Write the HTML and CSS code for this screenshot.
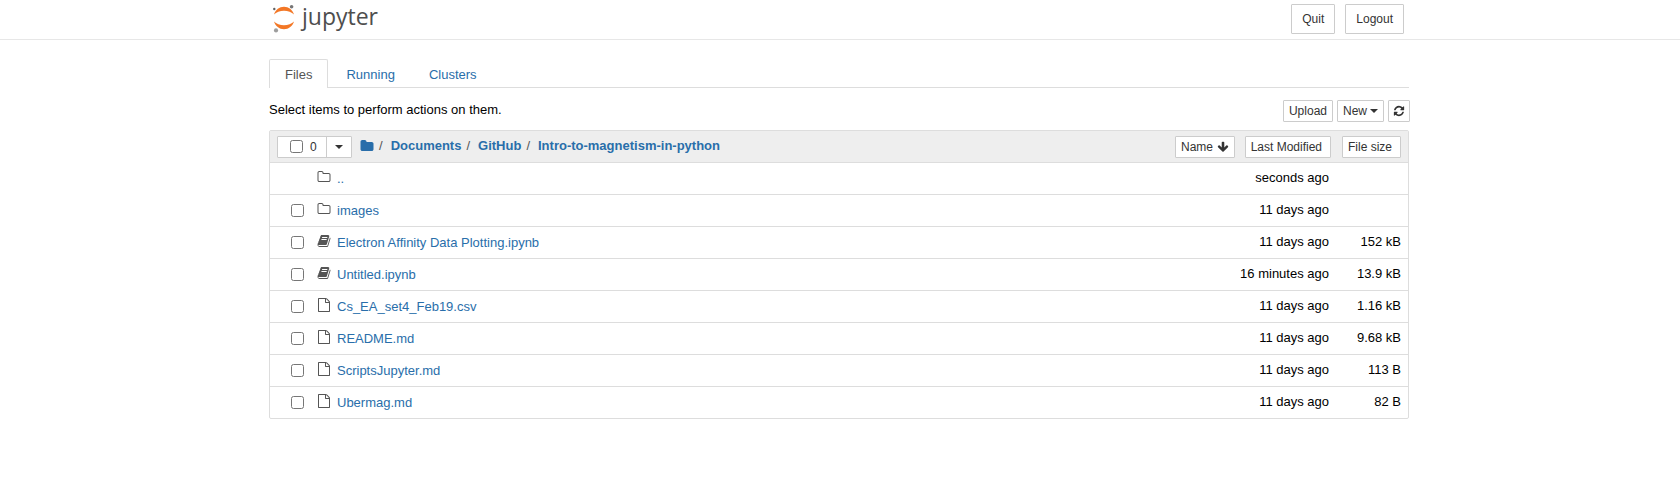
FILE: index.html
```html
<!DOCTYPE html>
<html lang="en">
<head>
<meta charset="utf-8">
<title>Home Page - Select or create a notebook</title>
<link rel="stylesheet" href="styles.css">
</head>
<body>
<svg class="sprite" aria-hidden="true">
  <symbol id="folder" viewBox="0 0 1792 1792"><path d="M1728 608v704q0 92-66 158t-158 66h-1216q-92 0-158-66t-66-158v-960q0-92 66-158t158-66h320q92 0 158 66t66 158v32h672q92 0 158 66t66 158z"/></symbol>
  <symbol id="folder-o" viewBox="0 0 1792 1792"><path d="M1600 1312v-704q0-40-28-68t-68-28h-704q-40 0-68-28t-28-68v-64q0-40-28-68t-68-28h-320q-40 0-68 28t-28 68v960q0 40 28 68t68 28h1216q40 0 68-28t28-68zm128-704v704q0 92-66 158t-158 66h-1216q-92 0-158-66t-66-158v-960q0-92 66-158t158-66h320q92 0 158 66t66 158v32h672q92 0 158 66t66 158z"/></symbol>
  <symbol id="file-o" viewBox="0 0 1792 1792"><path d="M1596 380q28 28 48 76t20 88v1152q0 40-28 68t-68 28h-1344q-40 0-68-28t-28-68v-1600q0-40 28-68t68-28h896q40 0 88 20t76 48zm-444-244v376h376q-10-29-22-41l-313-313q-12-12-41-22zm384 1528v-1024h-416q-40 0-68-28t-28-68v-416h-768v1536h1280z"/></symbol>
  <symbol id="book" viewBox="0 0 1792 1792"><path d="M1703 478q40 57 18 129l-275 906q-19 64-76.5 107.5t-122.5 43.5h-923q-77 0-148.5-53.5t-99.5-131.5q-24-67-2-127 0-4 3-27t4-37q1-8-3-21.5t-3-19.5q2-11 8-21t16.5-23.5 16.5-23.5q23-38 45-91.5t30-91.5q3-10 .5-30t-.5-28q3-11 17-28t17-23q21-36 42-92t25-90q1-9-2.5-32t.5-28q4-13 22-30.5t22-22.5q19-26 42.5-84.5t27.5-96.5q1-8-3-25.5t-2-26.5q2-8 9-18t18-23 17-21q8-12 16.5-30.5t15-35 16-36 19.5-32 26.5-23.5 36-11.5 47.5 5.5l-1 3q38-9 51-9h761q74 0 114 56t18 130l-274 906q-36 119-71.5 153.5t-128.5 34.5h-869q-27 0-38 15-11 16-1 43 24 70 144 70h923q29 0 56-15.5t35-41.5l300-987q7-22 5-57 38 15 59 43zm-1064 2q-4 13 2 22.5t20 9.5h608q13 0 25.5-9.5t16.5-22.5l21-64q4-13-2-22.5t-20-9.5h-608q-13 0-25.5 9.5t-16.5 22.5zm-83 256q-4 13 2 22.5t20 9.5h608q13 0 25.5-9.5t16.5-22.5l21-64q4-13-2-22.5t-20-9.5h-608q-13 0-25.5 9.5t-16.5 22.5z"/></symbol>
  <symbol id="refresh" viewBox="0 0 1792 1792"><path d="M1639 1056q0 5-1 7-64 268-268 434.5t-478 166.5q-146 0-282.5-55t-243.5-157l-129 129q-19 19-45 19t-45-19-19-45v-448q0-26 19-45t45-19h448q26 0 45 19t19 45-19 45l-137 137q71 66 161 102t187 36q134 0 250-65t186-179q11-17 53-117 8-23 30-23h192q13 0 22.5 9.5t9.5 22.5zm25-800v448q0 26-19 45t-45 19h-448q-26 0-45-19t-19-45 19-45l138-138q-148-137-349-137-134 0-250 65t-186 179q-11 17-53 117-8 23-30 23h-199q-13 0-22.5-9.5t-9.5-22.5v-7q65-268 270-434.5t480-166.5q146 0 284 55.5t245 156.5l130-129q19-19 45-19t45 19 19 45z"/></symbol>
  <symbol id="arrow-down" viewBox="0 0 1792 1792"><path d="M1675 832q0 53-37 90l-651 651q-38 38-91 38-54 0-90-38l-651-651q-38-36-38-90 0-53 38-91l74-75q39-37 91-37 53 0 90 37l294 294v-704q0-52 38-90t90-38h128q52 0 90 38t38 90v704l294-294q37-37 90-37 52 0 91 37l75 75q37 39 37 91z"/></symbol>
</svg>

<header class="header">
  <div class="container header-row">
    <a class="logo" href="#">
      <svg class="logo-mark" viewBox="0 0 24 30" aria-hidden="true">
        <path fill="#f37726" d="M2 10.500C3.500 5.800 7.300 2.800 12 2.800s8.500 3 10 7.700C19.700 8.200 16 6.800 12 6.800S4.300 8.200 2 10.500z"/>
        <path fill="#f37726" d="M2 17.600C3.500 22.300 7.300 25.300 12 25.300s8.500-3 10-7.700C19.700 19.900 16 21.300 12 21.300S4.300 19.900 2 17.600z"/>
        <circle fill="#767677" cx="19.600" cy="2.800" r="1.800"/>
        <circle fill="#616262" cx="2.300" cy="5" r="1.200"/>
        <circle fill="#9e9e9e" cx="4" cy="26.400" r="2.100"/>
      </svg>
      <span class="logo-text">jupyter</span>
    </a>
    <div class="session">
      <button class="btn" type="button">Quit</button>
      <button class="btn" type="button">Logout</button>
    </div>
  </div>
</header>

<main class="container">
  <nav class="tabs">
    <a class="tab active" href="#files">Files</a>
    <a class="tab" href="#running">Running</a>
    <a class="tab" href="#clusters">Clusters</a>
  </nav>

  <div class="toolbar">
    <span class="hint">Select items to perform actions on them.</span>
    <div class="actions">
      <button class="btn btn-xs" type="button">Upload</button>
      <button class="btn btn-xs" type="button">New <span class="caret"></span></button>
      <button class="btn btn-xs btn-icon" type="button" aria-label="Refresh"><svg class="icon-sm"><use href="#refresh"/></svg></button>
    </div>
  </div>

  <table class="files">
    <thead>
      <tr>
        <th class="name">
          <div class="path-row">
            <div class="select-group">
              <label class="select-all"><input type="checkbox">0</label>
              <button class="select-menu" type="button" aria-label="Select by type"><span class="caret"></span></button>
            </div>
            <nav class="crumbs">
              <a href="#" aria-label="Home"><svg class="icon"><use href="#folder"/></svg></a><i>/</i>
              <a href="#">Documents</a><i>/</i>
              <a href="#">GitHub</a><i>/</i>
              <a href="#">Intro-to-magnetism-in-python</a>
            </nav>
            <button class="btn btn-xs sort-name" type="button">Name <svg class="icon-sm"><use href="#arrow-down"/></svg></button>
          </div>
        </th>
        <th class="modified"><button class="btn btn-xs sort" type="button">Last Modified</button></th>
        <th class="size"><button class="btn btn-xs sort" type="button">File size</button></th>
      </tr>
    </thead>
    <tbody>
      <tr><td class="name"><div class="item"><span class="no-check"></span><svg class="icon"><use href="#folder-o"/></svg><a href="#">..</a></div></td><td class="modified">seconds ago</td><td class="size"></td></tr>
      <tr><td class="name"><div class="item"><input type="checkbox" aria-label="Select images"><svg class="icon"><use href="#folder-o"/></svg><a href="#">images</a></div></td><td class="modified">11 days ago</td><td class="size"></td></tr>
      <tr><td class="name"><div class="item"><input type="checkbox" aria-label="Select Electron Affinity Data Plotting.ipynb"><svg class="icon"><use href="#book"/></svg><a href="#">Electron Affinity Data Plotting.ipynb</a></div></td><td class="modified">11 days ago</td><td class="size">152 kB</td></tr>
      <tr><td class="name"><div class="item"><input type="checkbox" aria-label="Select Untitled.ipynb"><svg class="icon"><use href="#book"/></svg><a href="#">Untitled.ipynb</a></div></td><td class="modified">16 minutes ago</td><td class="size">13.9 kB</td></tr>
      <tr><td class="name"><div class="item"><input type="checkbox" aria-label="Select Cs_EA_set4_Feb19.csv"><svg class="icon"><use href="#file-o"/></svg><a href="#">Cs_EA_set4_Feb19.csv</a></div></td><td class="modified">11 days ago</td><td class="size">1.16 kB</td></tr>
      <tr><td class="name"><div class="item"><input type="checkbox" aria-label="Select README.md"><svg class="icon"><use href="#file-o"/></svg><a href="#">README.md</a></div></td><td class="modified">11 days ago</td><td class="size">9.68 kB</td></tr>
      <tr><td class="name"><div class="item"><input type="checkbox" aria-label="Select ScriptsJupyter.md"><svg class="icon"><use href="#file-o"/></svg><a href="#">ScriptsJupyter.md</a></div></td><td class="modified">11 days ago</td><td class="size">113 B</td></tr>
      <tr><td class="name"><div class="item"><input type="checkbox" aria-label="Select Ubermag.md"><svg class="icon"><use href="#file-o"/></svg><a href="#">Ubermag.md</a></div></td><td class="modified">11 days ago</td><td class="size">82 B</td></tr>
    </tbody>
  </table>
</main>
</body>
</html>
```
FILE: styles.css
```css
* { box-sizing: border-box; }
body {
  margin: 0;
  padding-right: 2px;
  background: #fff;
  color: #000;
  font: 13px/18px "Liberation Sans", Arial, sans-serif;
}
a { color: #296eaa; text-decoration: none; }
input[type="checkbox"] { width: 13px; height: 13px; margin: 0; }
.sprite { display: none; }
.container { max-width: 1140px; margin: 0 auto; }

.header { border-bottom: 1px solid #e7e7e7; margin-right: -2px; padding-right: 2px; }
.header-row { display: flex; justify-content: space-between; align-items: flex-start; padding: 4px 5px 5px 3px; }
.logo { display: flex; height: 30px; gap: 6px; }
.logo-mark { width: 24px; height: 30px; }
.logo-text { font: 23px/24px "Open Sans", "Noto Sans", sans-serif; color: #4e4e4e; }
.session { display: flex; gap: 10px; }

.btn {
  display: inline-flex;
  align-items: center;
  justify-content: center;
  gap: 4px;
  height: 30px;
  padding: 0 10px;
  border: 1px solid #ccc;
  border-radius: 1px;
  background: #fff;
  color: #333;
  font: 12px/18px "Liberation Sans", Arial, sans-serif;
  white-space: nowrap;
}
.btn-xs { height: 22px; padding: 0 5px; }
.actions .btn-xs { gap: 3px; }
.btn-icon { padding: 0 4px; }
.caret {
  border-top: 4px solid #333;
  border-left: 4px solid transparent;
  border-right: 4px solid transparent;
}
.icon { display: block; flex: none; width: 14px; height: 14px; fill: currentColor; }
.icon-sm { display: block; width: 12px; height: 12px; fill: currentColor; }

.tabs { display: flex; gap: 2px; margin-top: 19px; border-bottom: 1px solid #ddd; }
.tab { padding: 6px 15px 4px; border: 1px solid transparent; border-bottom: 0; margin-bottom: -1px; border-radius: 2px 2px 0 0; }
.tab.active { border-color: #ddd; background: #fff; color: #555; }

.toolbar { display: flex; justify-content: space-between; padding: 12px 0 8px; margin-right: -1px; }
.hint { line-height: 20px; }
.actions { display: flex; gap: 4px; }

.files {
  width: 100%;
  table-layout: fixed;
  border: 1px solid #ddd;
  border-radius: 2px;
  border-spacing: 0;
}
.files th, .files td { height: 32px; padding: 0; border-bottom: 1px solid #ddd; font-weight: 400; text-align: right; }
.files tbody tr:last-child td { height: 31px; border-bottom: 0; }
.files thead th { background: #eee; }
.files .name { text-align: left; }
.files td.modified, .files td.size { padding-bottom: 2px; }
.files .modified { width: 96px; }
.files td.modified { padding-right: 2px; }
.files .size { width: 77px; padding-right: 7px; }
.files .sort { padding-right: 8px; }

.path-row { display: flex; align-items: center; padding-left: 7px; }
.select-group { display: flex; height: 22px; border: 1px solid #ccc; border-radius: 1px; background: #fff; }
.select-all { display: flex; align-items: center; gap: 7px; width: 49px; padding-left: 12px; border-right: 1px solid #ccc; color: #333; font-size: 12px; }
.select-menu { display: flex; align-items: center; justify-content: center; width: 24px; padding: 0; border: 0; background: none; }
.crumbs { display: flex; align-items: center; padding: 0 0 2px 8px; color: #555; }
.crumbs a { font-weight: 700; }
.crumbs i { margin: 0 8px 0 5px; font-style: normal; }
.sort-name { margin-left: auto; }

.item { display: flex; align-items: center; padding-left: 21px; color: #555; }
.item input, .item .no-check { width: 13px; margin-right: 13px; }
.item .icon { margin-bottom: 3px; }
.item a { margin-left: 6px; }
```
